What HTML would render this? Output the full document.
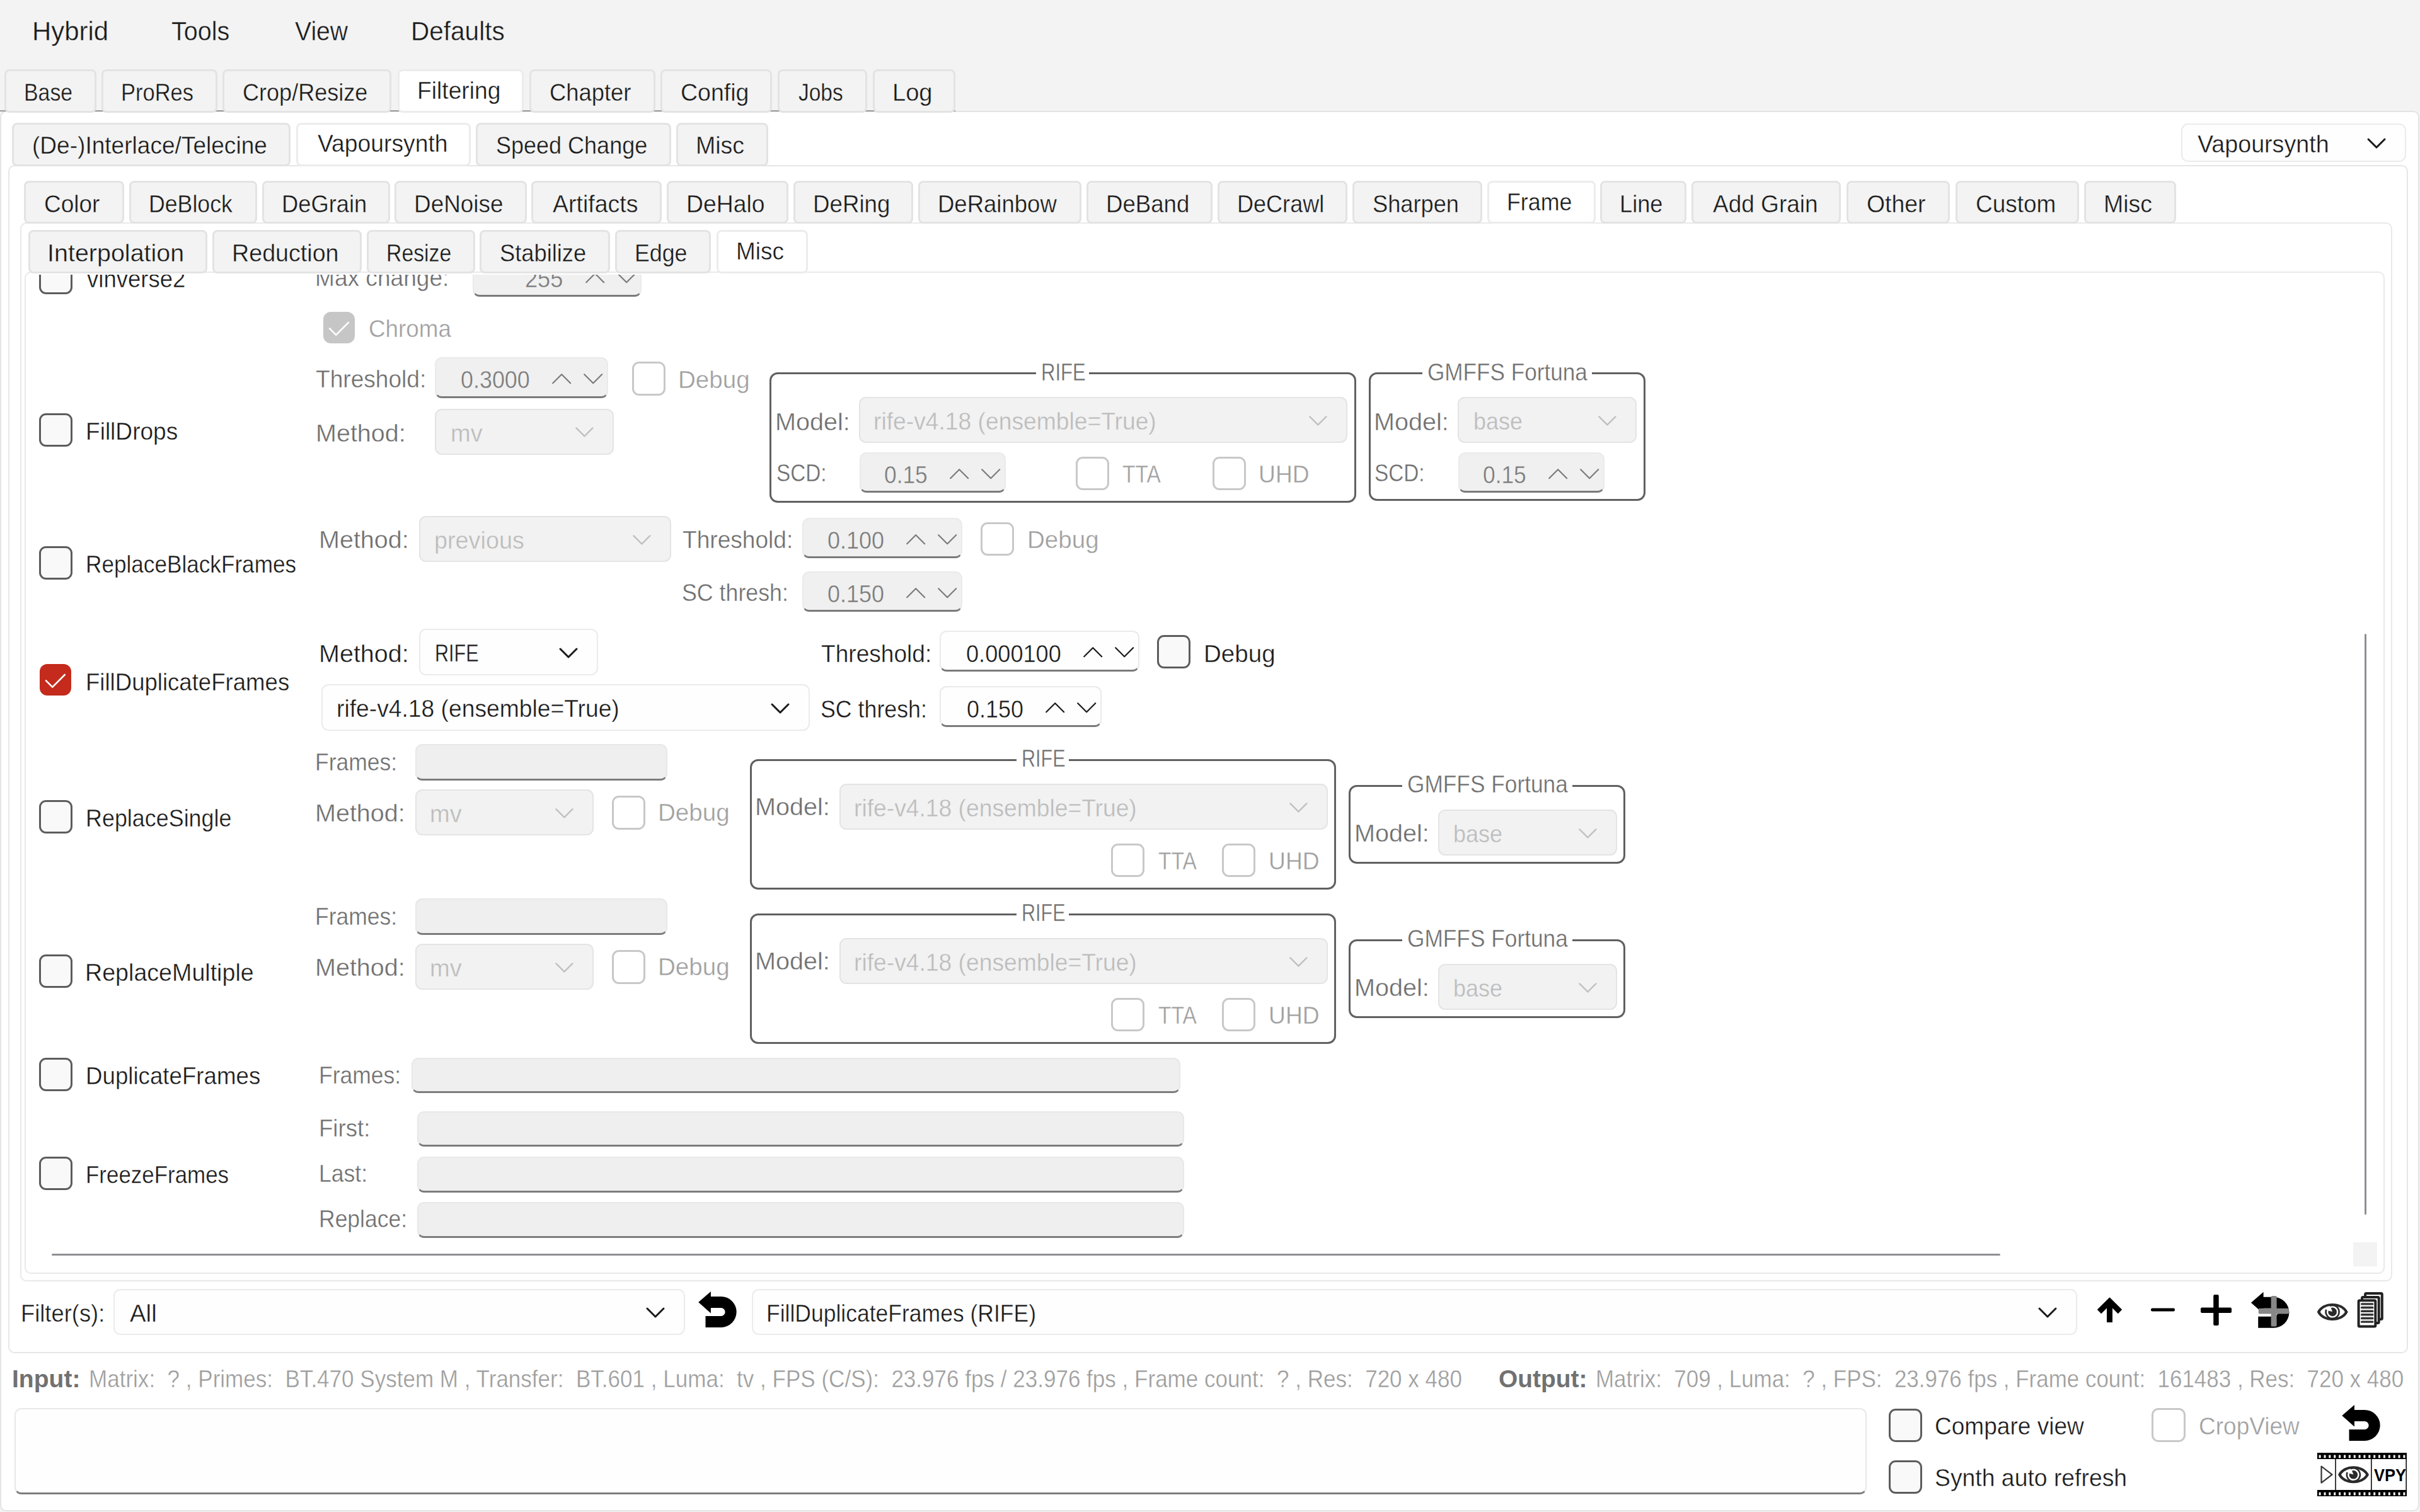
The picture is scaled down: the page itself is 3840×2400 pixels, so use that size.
<!DOCTYPE html>
<html><head><meta charset="utf-8"><style>
html,body{margin:0;padding:0;width:3840px;height:2400px;overflow:hidden;background:#f3f3f3}
.r{position:absolute;box-sizing:border-box}
.t{position:absolute;white-space:pre;line-height:1;font-family:"Liberation Sans",sans-serif;transform-origin:0 0}
</style></head><body>
<div class="r" style="left:0;top:0;width:3840px;height:2400px;background:#f3f3f3"></div>
<span class="t" style="left:50.63px;top:29px;font-size:42px;color:#1a1a1a;transform:scaleX(0.9978);-webkit-text-stroke:0.4px #f3f3f3;">Hybrid</span>
<span class="t" style="left:272.18px;top:29px;font-size:42px;color:#1a1a1a;transform:scaleX(0.9412);-webkit-text-stroke:0.4px #f3f3f3;">Tools</span>
<span class="t" style="left:467.77px;top:29px;font-size:42px;color:#1a1a1a;transform:scaleX(0.9320);-webkit-text-stroke:0.4px #f3f3f3;">View</span>
<span class="t" style="left:651.74px;top:29px;font-size:42px;color:#1a1a1a;transform:scaleX(0.9648);-webkit-text-stroke:0.4px #f3f3f3;">Defaults</span>
<div class="r" style="left:0px;top:176px;width:3839px;height:2223px;background:#ffffff;border:2px solid #e4e4e4;border-radius:10px;"></div>
<div class="r" style="left:0px;top:175px;width:1516px;height:1.5px;background:#9a9a9a;"></div>
<div class="r" style="left:7px;top:110px;width:146px;height:68.5px;background:#f3f3f3;border:3px solid #e3e3e3;border-radius:8px;"></div>
<span class="t" style="left:38.29px;top:127px;font-size:39px;color:#1a1a1a;transform:scaleX(0.8678);-webkit-text-stroke:0.4px #f3f3f3;">Base</span>
<div class="r" style="left:161px;top:110px;width:184px;height:68.5px;background:#f3f3f3;border:3px solid #e3e3e3;border-radius:8px;"></div>
<span class="t" style="left:192.24px;top:127px;font-size:39px;color:#1a1a1a;transform:scaleX(0.8845);-webkit-text-stroke:0.4px #f3f3f3;">ProRes</span>
<div class="r" style="left:353px;top:110px;width:268px;height:68.5px;background:#f3f3f3;border:3px solid #e3e3e3;border-radius:8px;"></div>
<span class="t" style="left:385.15px;top:127px;font-size:39px;color:#1a1a1a;transform:scaleX(0.9247);-webkit-text-stroke:0.4px #f3f3f3;">Crop/Resize</span>
<div class="r" style="left:631px;top:110px;width:200px;height:68.5px;background:#ffffff;border:3px solid #ececec;border-radius:8px;"></div>
<span class="t" style="left:662.02px;top:124px;font-size:39px;color:#1a1a1a;transform:scaleX(0.9549);-webkit-text-stroke:0.4px #fff;">Filtering</span>
<div class="r" style="left:840px;top:110px;width:200px;height:68.5px;background:#f3f3f3;border:3px solid #e3e3e3;border-radius:8px;"></div>
<span class="t" style="left:872.13px;top:127px;font-size:39px;color:#1a1a1a;transform:scaleX(0.9330);-webkit-text-stroke:0.4px #f3f3f3;">Chapter</span>
<div class="r" style="left:1048px;top:110px;width:177px;height:68.5px;background:#f3f3f3;border:3px solid #e3e3e3;border-radius:8px;"></div>
<span class="t" style="left:1080.08px;top:127px;font-size:39px;color:#1a1a1a;transform:scaleX(0.9618);-webkit-text-stroke:0.4px #f3f3f3;">Config</span>
<div class="r" style="left:1234px;top:110px;width:142px;height:68.5px;background:#f3f3f3;border:3px solid #e3e3e3;border-radius:8px;"></div>
<span class="t" style="left:1267.46px;top:127px;font-size:39px;color:#1a1a1a;transform:scaleX(0.8585);-webkit-text-stroke:0.4px #f3f3f3;">Jobs</span>
<div class="r" style="left:1385px;top:110px;width:131px;height:68.5px;background:#f3f3f3;border:3px solid #e3e3e3;border-radius:8px;"></div>
<span class="t" style="left:1415.95px;top:127px;font-size:39px;color:#1a1a1a;transform:scaleX(0.9768);-webkit-text-stroke:0.4px #f3f3f3;">Log</span>
<div class="r" style="left:13px;top:262px;width:3808px;height:1886px;background:#ffffff;border:2px solid #e6e6e6;border-radius:10px;"></div>
<div class="r" style="left:19px;top:195px;width:442px;height:69px;background:#f3f3f3;border:3px solid #e3e3e3;border-radius:8px;"></div>
<span class="t" style="left:50.74px;top:211px;font-size:39px;color:#1a1a1a;transform:scaleX(0.9504);-webkit-text-stroke:0.4px #f3f3f3;">(De-)Interlace/Telecine</span>
<div class="r" style="left:470px;top:195px;width:277px;height:69px;background:#ffffff;border:3px solid #ececec;border-radius:8px;"></div>
<span class="t" style="left:503.88px;top:208px;font-size:39px;color:#1a1a1a;transform:scaleX(0.9561);-webkit-text-stroke:0.4px #fff;">Vapoursynth</span>
<div class="r" style="left:755px;top:195px;width:310px;height:69px;background:#f3f3f3;border:3px solid #e3e3e3;border-radius:8px;"></div>
<span class="t" style="left:787.38px;top:211px;font-size:39px;color:#1a1a1a;transform:scaleX(0.9231);-webkit-text-stroke:0.4px #f3f3f3;">Speed Change</span>
<div class="r" style="left:1073px;top:195px;width:146px;height:69px;background:#f3f3f3;border:3px solid #e3e3e3;border-radius:8px;"></div>
<span class="t" style="left:1104.00px;top:211px;font-size:39px;color:#1a1a1a;transform:scaleX(0.9605);-webkit-text-stroke:0.4px #f3f3f3;">Misc</span>
<div class="r" style="left:3461px;top:196px;width:357px;height:61px;background:#fefefe;border:2px solid #ebebeb;border-radius:11px;"></div>
<span class="t" style="left:3486.88px;top:209px;font-size:39px;color:#1a1a1a;transform:scaleX(0.9654);-webkit-text-stroke:0.4px #fefefe;">Vapoursynth</span>
<svg class="r" style="left:3755px;top:218.0px" width="32" height="19.0"><path d="M3 3 L16.0 16.0 L29 3" fill="none" stroke="#1a1a1a" stroke-width="3" stroke-linecap="round" stroke-linejoin="round"/></svg>
<div class="r" style="left:32px;top:353px;width:3764px;height:1681px;background:#ffffff;border:2px solid #e9e9e9;border-radius:10px;"></div>
<div class="r" style="left:38px;top:286.5px;width:159px;height:68.5px;background:#f3f3f3;border:3px solid #e3e3e3;border-radius:8px;"></div>
<span class="t" style="left:70.10px;top:304px;font-size:39px;color:#1a1a1a;transform:scaleX(0.9490);-webkit-text-stroke:0.4px #f3f3f3;">Color</span>
<div class="r" style="left:205px;top:286.5px;width:203px;height:68.5px;background:#f3f3f3;border:3px solid #e3e3e3;border-radius:8px;"></div>
<span class="t" style="left:236.14px;top:304px;font-size:39px;color:#1a1a1a;transform:scaleX(0.9147);-webkit-text-stroke:0.4px #f3f3f3;">DeBlock</span>
<div class="r" style="left:416px;top:286.5px;width:203px;height:68.5px;background:#f3f3f3;border:3px solid #e3e3e3;border-radius:8px;"></div>
<span class="t" style="left:447.09px;top:304px;font-size:39px;color:#1a1a1a;transform:scaleX(0.9319);-webkit-text-stroke:0.4px #f3f3f3;">DeGrain</span>
<div class="r" style="left:626px;top:286.5px;width:210px;height:68.5px;background:#f3f3f3;border:3px solid #e3e3e3;border-radius:8px;"></div>
<span class="t" style="left:657.04px;top:304px;font-size:39px;color:#1a1a1a;transform:scaleX(0.9465);-webkit-text-stroke:0.4px #f3f3f3;">DeNoise</span>
<div class="r" style="left:843px;top:286.5px;width:207px;height:68.5px;background:#f3f3f3;border:3px solid #e3e3e3;border-radius:8px;"></div>
<span class="t" style="left:876.88px;top:304px;font-size:39px;color:#1a1a1a;transform:scaleX(0.9614);-webkit-text-stroke:0.4px #f3f3f3;">Artifacts</span>
<div class="r" style="left:1058px;top:286.5px;width:193px;height:68.5px;background:#f3f3f3;border:3px solid #e3e3e3;border-radius:8px;"></div>
<span class="t" style="left:1089.01px;top:304px;font-size:39px;color:#1a1a1a;transform:scaleX(0.9571);-webkit-text-stroke:0.4px #f3f3f3;">DeHalo</span>
<div class="r" style="left:1259px;top:286.5px;width:190px;height:68.5px;background:#f3f3f3;border:3px solid #e3e3e3;border-radius:8px;"></div>
<span class="t" style="left:1290.06px;top:304px;font-size:39px;color:#1a1a1a;transform:scaleX(0.9407);-webkit-text-stroke:0.4px #f3f3f3;">DeRing</span>
<div class="r" style="left:1457px;top:286.5px;width:259px;height:68.5px;background:#f3f3f3;border:3px solid #e3e3e3;border-radius:8px;"></div>
<span class="t" style="left:1488.07px;top:304px;font-size:39px;color:#1a1a1a;transform:scaleX(0.9364);-webkit-text-stroke:0.4px #f3f3f3;">DeRainbow</span>
<div class="r" style="left:1724px;top:286.5px;width:200px;height:68.5px;background:#f3f3f3;border:3px solid #e3e3e3;border-radius:8px;"></div>
<span class="t" style="left:1755.07px;top:304px;font-size:39px;color:#1a1a1a;transform:scaleX(0.9390);-webkit-text-stroke:0.4px #f3f3f3;">DeBand</span>
<div class="r" style="left:1932px;top:286.5px;width:206px;height:68.5px;background:#f3f3f3;border:3px solid #e3e3e3;border-radius:8px;"></div>
<span class="t" style="left:1963.11px;top:304px;font-size:39px;color:#1a1a1a;transform:scaleX(0.9244);-webkit-text-stroke:0.4px #f3f3f3;">DeCrawl</span>
<div class="r" style="left:2146px;top:286.5px;width:206px;height:68.5px;background:#f3f3f3;border:3px solid #e3e3e3;border-radius:8px;"></div>
<span class="t" style="left:2178.37px;top:304px;font-size:39px;color:#1a1a1a;transform:scaleX(0.9293);-webkit-text-stroke:0.4px #f3f3f3;">Sharpen</span>
<div class="r" style="left:2360px;top:286.5px;width:172px;height:68.5px;background:#ffffff;border:3px solid #ececec;border-radius:8px;"></div>
<span class="t" style="left:2391.13px;top:301px;font-size:39px;color:#1a1a1a;transform:scaleX(0.9177);-webkit-text-stroke:0.4px #fff;">Frame</span>
<div class="r" style="left:2539px;top:286.5px;width:137px;height:68.5px;background:#f3f3f3;border:3px solid #e3e3e3;border-radius:8px;"></div>
<span class="t" style="left:2570.10px;top:304px;font-size:39px;color:#1a1a1a;transform:scaleX(0.9292);-webkit-text-stroke:0.4px #f3f3f3;">Line</span>
<div class="r" style="left:2684px;top:286.5px;width:237px;height:68.5px;background:#f3f3f3;border:3px solid #e3e3e3;border-radius:8px;"></div>
<span class="t" style="left:2717.88px;top:304px;font-size:39px;color:#1a1a1a;transform:scaleX(0.9487);-webkit-text-stroke:0.4px #f3f3f3;">Add Grain</span>
<div class="r" style="left:2930px;top:286.5px;width:164px;height:68.5px;background:#f3f3f3;border:3px solid #e3e3e3;border-radius:8px;"></div>
<span class="t" style="left:2962.20px;top:304px;font-size:39px;color:#1a1a1a;transform:scaleX(0.9579);-webkit-text-stroke:0.4px #f3f3f3;">Other</span>
<div class="r" style="left:3103px;top:286.5px;width:196px;height:68.5px;background:#f3f3f3;border:3px solid #e3e3e3;border-radius:8px;"></div>
<span class="t" style="left:3135.10px;top:304px;font-size:39px;color:#1a1a1a;transform:scaleX(0.9480);-webkit-text-stroke:0.4px #f3f3f3;">Custom</span>
<div class="r" style="left:3307px;top:286.5px;width:146px;height:68.5px;background:#f3f3f3;border:3px solid #e3e3e3;border-radius:8px;"></div>
<span class="t" style="left:3338.00px;top:304px;font-size:39px;color:#1a1a1a;transform:scaleX(0.9605);-webkit-text-stroke:0.4px #f3f3f3;">Misc</span>
<div class="r" style="left:39px;top:431px;width:3745px;height:1591px;background:#ffffff;border:2px solid #e9e9e9;border-radius:10px;"></div>
<div class="r" style="left:45px;top:365px;width:284px;height:69px;background:#f3f3f3;border:3px solid #e3e3e3;border-radius:8px;"></div>
<span class="t" style="left:75.33px;top:382px;font-size:39px;color:#1a1a1a;transform:scaleX(1.0120);-webkit-text-stroke:0.4px #f3f3f3;">Interpolation</span>
<div class="r" style="left:337px;top:365px;width:237px;height:69px;background:#f3f3f3;border:3px solid #e3e3e3;border-radius:8px;"></div>
<span class="t" style="left:367.98px;top:382px;font-size:39px;color:#1a1a1a;transform:scaleX(0.9654);-webkit-text-stroke:0.4px #f3f3f3;">Reduction</span>
<div class="r" style="left:582px;top:365px;width:172px;height:69px;background:#f3f3f3;border:3px solid #e3e3e3;border-radius:8px;"></div>
<span class="t" style="left:613.30px;top:382px;font-size:39px;color:#1a1a1a;transform:scaleX(0.8656);-webkit-text-stroke:0.4px #f3f3f3;">Resize</span>
<div class="r" style="left:761px;top:365px;width:207px;height:69px;background:#f3f3f3;border:3px solid #e3e3e3;border-radius:8px;"></div>
<span class="t" style="left:793.37px;top:382px;font-size:39px;color:#1a1a1a;transform:scaleX(0.9306);-webkit-text-stroke:0.4px #f3f3f3;">Stabilize</span>
<div class="r" style="left:976px;top:365px;width:152px;height:69px;background:#f3f3f3;border:3px solid #e3e3e3;border-radius:8px;"></div>
<span class="t" style="left:1007.14px;top:382px;font-size:39px;color:#1a1a1a;transform:scaleX(0.9159);-webkit-text-stroke:0.4px #f3f3f3;">Edge</span>
<div class="r" style="left:1137px;top:365px;width:145px;height:69px;background:#ffffff;border:3px solid #ececec;border-radius:8px;"></div>
<span class="t" style="left:1168.04px;top:379px;font-size:39px;color:#1a1a1a;transform:scaleX(0.9474);-webkit-text-stroke:0.4px #fff;">Misc</span>
<div class="r" style="left:41px;top:436px;width:3741px;height:1584px;overflow:hidden"><div class="r" style="left:-41px;top:-436px;width:3840px;height:2400px">
<div class="r" style="left:61.5px;top:413.5px;width:53.0px;height:53.0px;background:#f9f9f9;border:3px solid #5c5c5c;border-radius:11px;"></div>
<span class="t" style="left:138.38px;top:422.5px;font-size:39px;color:#1a1a1a;transform:scaleX(0.9371);-webkit-text-stroke:0.4px #fff;">vinverse2</span>
<span class="t" style="left:500.03px;top:420.5px;font-size:39px;color:#6e6e6e;transform:scaleX(0.9510);-webkit-text-stroke:0.4px #fff;">Max change:</span>
<div class="r" style="left:750px;top:407px;width:268px;height:64px;background:#f0f0f0;border:2px solid #eaeaea;border-radius:11px;border-bottom:3px solid #7a7a7a;"></div>
<svg class="r" style="left:927.8px;top:431.8px" width="32.4" height="18.4"><path d="M2.2 16.2 L16.2 2.2 L30.2 16.2" fill="none" stroke="#7b7b7b" stroke-width="2.2" stroke-linecap="round" stroke-linejoin="round"/></svg>
<svg class="r" style="left:977.8px;top:431.8px" width="32.4" height="18.4"><path d="M2.2 2.2 L16.2 16.2 L30.2 2.2" fill="none" stroke="#7b7b7b" stroke-width="2.2" stroke-linecap="round" stroke-linejoin="round"/></svg>
<span class="t" style="left:833.15px;top:423px;font-size:39px;color:#7b7b7b;transform:scaleX(0.9268);-webkit-text-stroke:0.4px #f0f0f0;">255</span>
<div class="r" style="left:513.0px;top:495.0px;width:50.0px;height:50.0px;background:#c6c6c6;border-radius:12px;"></div>
<svg class="r" style="left:513.0px;top:495.0px" width="50" height="50"><path d="M10 26.4 L20.2 36.6 L39.8 17" fill="none" stroke="#fff" stroke-width="2.6" stroke-linecap="round" stroke-linejoin="round"/></svg>
<span class="t" style="left:585.11px;top:501.5px;font-size:39px;color:#a0a0a0;transform:scaleX(0.9433);-webkit-text-stroke:0.4px #fff;">Chroma</span>
<span class="t" style="left:501.17px;top:582px;font-size:39px;color:#6e6e6e;transform:scaleX(0.9513);-webkit-text-stroke:0.4px #fff;">Threshold:</span>
<div class="r" style="left:690px;top:567px;width:275px;height:65px;background:#f0f0f0;border:2px solid #eaeaea;border-radius:11px;border-bottom:3px solid #7a7a7a;"></div>
<svg class="r" style="left:874.8px;top:592.3px" width="32.4" height="18.4"><path d="M2.2 16.2 L16.2 2.2 L30.2 16.2" fill="none" stroke="#7b7b7b" stroke-width="2.2" stroke-linecap="round" stroke-linejoin="round"/></svg>
<svg class="r" style="left:924.8px;top:592.3px" width="32.4" height="18.4"><path d="M2.2 2.2 L16.2 16.2 L30.2 2.2" fill="none" stroke="#7b7b7b" stroke-width="2.2" stroke-linecap="round" stroke-linejoin="round"/></svg>
<span class="t" style="left:730.62px;top:583px;font-size:39px;color:#7b7b7b;transform:scaleX(0.9204);-webkit-text-stroke:0.4px #f0f0f0;">0.3000</span>
<div class="r" style="left:1002.5px;top:574.0px;width:53.5px;height:53.5px;background:#ffffff;border:3px solid #c8c8c8;border-radius:11px;"></div>
<span class="t" style="left:1075.91px;top:583px;font-size:39px;color:#a0a0a0;transform:scaleX(0.9886);-webkit-text-stroke:0.4px #fff;">Debug</span>
<div class="r" style="left:61.5px;top:656px;width:53.0px;height:53px;background:#f9f9f9;border:3px solid #5c5c5c;border-radius:11px;"></div>
<span class="t" style="left:136.03px;top:665px;font-size:39px;color:#1a1a1a;transform:scaleX(0.9506);-webkit-text-stroke:0.4px #fff;">FillDrops</span>
<span class="t" style="left:500.83px;top:668px;font-size:39px;color:#6e6e6e;transform:scaleX(1.0130);-webkit-text-stroke:0.4px #fff;">Method:</span>
<div class="r" style="left:690px;top:648.5px;width:284px;height:73.5px;background:#f2f2f2;border:2px solid #e4e4e4;border-radius:11px;"></div>
<span class="t" style="left:714.94px;top:668px;font-size:39px;color:#bcbcbc;transform:scaleX(0.9746);-webkit-text-stroke:0.4px #f2f2f2;">mv</span>
<svg class="r" style="left:911.6px;top:677.35px" width="30.8" height="17.8"><path d="M2.4 2.4 L15.4 15.4 L28.4 2.4" fill="none" stroke="#c0c0c0" stroke-width="2.4" stroke-linecap="round" stroke-linejoin="round"/></svg>
<div class="r" style="left:1221px;top:591px;width:931px;height:207px;border:3px solid #606060;border-radius:13px;"></div>
<div class="r" style="left:1644px;top:589px;width:84px;height:7px;background:#ffffff;"></div>
<span class="t" style="left:1651.51px;top:571px;font-size:39px;color:#6e6e6e;transform:scaleX(0.7964);-webkit-text-stroke:0.4px #fff;">RIFE</span>
<span class="t" style="left:1229.83px;top:650px;font-size:39px;color:#6e6e6e;transform:scaleX(1.0147);-webkit-text-stroke:0.4px #fff;">Model:</span>
<div class="r" style="left:1363px;top:630px;width:775px;height:73px;background:#f2f2f2;border:2px solid #e4e4e4;border-radius:11px;"></div>
<span class="t" style="left:1386.49px;top:649px;font-size:39px;color:#bcbcbc;transform:scaleX(0.9548);-webkit-text-stroke:0.4px #f2f2f2;">rife-v4.18 (ensemble=True)</span>
<svg class="r" style="left:2075.6px;top:658.6px" width="30.8" height="17.8"><path d="M2.4 2.4 L15.4 15.4 L28.4 2.4" fill="none" stroke="#c0c0c0" stroke-width="2.4" stroke-linecap="round" stroke-linejoin="round"/></svg>
<span class="t" style="left:1231.51px;top:731px;font-size:39px;color:#6e6e6e;transform:scaleX(0.8535);-webkit-text-stroke:0.4px #fff;">SCD:</span>
<div class="r" style="left:1364px;top:718px;width:232px;height:64px;background:#f0f0f0;border:2px solid #eaeaea;border-radius:11px;border-bottom:3px solid #7a7a7a;"></div>
<svg class="r" style="left:1505.8px;top:742.8px" width="32.4" height="18.4"><path d="M2.2 16.2 L16.2 2.2 L30.2 16.2" fill="none" stroke="#7b7b7b" stroke-width="2.2" stroke-linecap="round" stroke-linejoin="round"/></svg>
<svg class="r" style="left:1555.8px;top:742.8px" width="32.4" height="18.4"><path d="M2.2 2.2 L16.2 16.2 L30.2 2.2" fill="none" stroke="#7b7b7b" stroke-width="2.2" stroke-linecap="round" stroke-linejoin="round"/></svg>
<span class="t" style="left:1402.64px;top:734px;font-size:39px;color:#7b7b7b;transform:scaleX(0.9057);-webkit-text-stroke:0.4px #f0f0f0;">0.15</span>
<div class="r" style="left:1706.5px;top:724.5px;width:53.5px;height:53.5px;background:#ffffff;border:3px solid #c8c8c8;border-radius:11px;"></div>
<span class="t" style="left:1781.25px;top:733px;font-size:39px;color:#a0a0a0;transform:scaleX(0.8602);-webkit-text-stroke:0.4px #fff;">TTA</span>
<div class="r" style="left:1923.5px;top:724.5px;width:53.5px;height:53.5px;background:#ffffff;border:3px solid #c8c8c8;border-radius:11px;"></div>
<span class="t" style="left:1997.14px;top:733px;font-size:39px;color:#a0a0a0;transform:scaleX(0.9545);-webkit-text-stroke:0.4px #fff;">UHD</span>
<div class="r" style="left:2172px;top:591px;width:439px;height:204px;border:3px solid #606060;border-radius:13px;"></div>
<div class="r" style="left:2257px;top:589px;width:269px;height:7px;background:#ffffff;"></div>
<span class="t" style="left:2265.20px;top:571px;font-size:39px;color:#6e6e6e;transform:scaleX(0.9008);-webkit-text-stroke:0.4px #fff;">GMFFS Fortuna</span>
<span class="t" style="left:2179.83px;top:650px;font-size:39px;color:#6e6e6e;transform:scaleX(1.0147);-webkit-text-stroke:0.4px #fff;">Model:</span>
<div class="r" style="left:2313px;top:630px;width:284px;height:73px;background:#f2f2f2;border:2px solid #e4e4e4;border-radius:11px;"></div>
<span class="t" style="left:2337.70px;top:649px;font-size:39px;color:#bcbcbc;transform:scaleX(0.9207);-webkit-text-stroke:0.4px #f2f2f2;">base</span>
<svg class="r" style="left:2534.6px;top:658.6px" width="30.8" height="17.8"><path d="M2.4 2.4 L15.4 15.4 L28.4 2.4" fill="none" stroke="#c0c0c0" stroke-width="2.4" stroke-linecap="round" stroke-linejoin="round"/></svg>
<span class="t" style="left:2180.51px;top:731px;font-size:39px;color:#6e6e6e;transform:scaleX(0.8535);-webkit-text-stroke:0.4px #fff;">SCD:</span>
<div class="r" style="left:2314px;top:718px;width:232px;height:64px;background:#f0f0f0;border:2px solid #eaeaea;border-radius:11px;border-bottom:3px solid #7a7a7a;"></div>
<svg class="r" style="left:2455.8px;top:742.8px" width="32.4" height="18.4"><path d="M2.2 16.2 L16.2 2.2 L30.2 16.2" fill="none" stroke="#7b7b7b" stroke-width="2.2" stroke-linecap="round" stroke-linejoin="round"/></svg>
<svg class="r" style="left:2505.8px;top:742.8px" width="32.4" height="18.4"><path d="M2.2 2.2 L16.2 16.2 L30.2 2.2" fill="none" stroke="#7b7b7b" stroke-width="2.2" stroke-linecap="round" stroke-linejoin="round"/></svg>
<span class="t" style="left:2352.64px;top:734px;font-size:39px;color:#7b7b7b;transform:scaleX(0.9057);-webkit-text-stroke:0.4px #f0f0f0;">0.15</span>
<div class="r" style="left:61.5px;top:867px;width:53.0px;height:53px;background:#f9f9f9;border:3px solid #5c5c5c;border-radius:11px;"></div>
<span class="t" style="left:135.68px;top:876px;font-size:39px;color:#1a1a1a;transform:scaleX(0.9013);-webkit-text-stroke:0.4px #fff;">ReplaceBlackFrames</span>
<span class="t" style="left:505.83px;top:837px;font-size:39px;color:#6e6e6e;transform:scaleX(1.0130);-webkit-text-stroke:0.4px #fff;">Method:</span>
<div class="r" style="left:665px;top:819px;width:400px;height:73px;background:#f2f2f2;border:2px solid #e4e4e4;border-radius:11px;"></div>
<span class="t" style="left:688.58px;top:838px;font-size:39px;color:#bcbcbc;transform:scaleX(0.9686);-webkit-text-stroke:0.4px #f2f2f2;">previous</span>
<svg class="r" style="left:1002.6px;top:847.6px" width="30.8" height="17.8"><path d="M2.4 2.4 L15.4 15.4 L28.4 2.4" fill="none" stroke="#c0c0c0" stroke-width="2.4" stroke-linecap="round" stroke-linejoin="round"/></svg>
<span class="t" style="left:1083.17px;top:837px;font-size:39px;color:#6e6e6e;transform:scaleX(0.9513);-webkit-text-stroke:0.4px #fff;">Threshold:</span>
<div class="r" style="left:1273px;top:822px;width:254px;height:64px;background:#f0f0f0;border:2px solid #eaeaea;border-radius:11px;border-bottom:3px solid #7a7a7a;"></div>
<svg class="r" style="left:1436.8px;top:846.8px" width="32.4" height="18.4"><path d="M2.2 16.2 L16.2 2.2 L30.2 16.2" fill="none" stroke="#7b7b7b" stroke-width="2.2" stroke-linecap="round" stroke-linejoin="round"/></svg>
<svg class="r" style="left:1486.8px;top:846.8px" width="32.4" height="18.4"><path d="M2.2 2.2 L16.2 16.2 L30.2 2.2" fill="none" stroke="#7b7b7b" stroke-width="2.2" stroke-linecap="round" stroke-linejoin="round"/></svg>
<span class="t" style="left:1312.62px;top:838px;font-size:39px;color:#7b7b7b;transform:scaleX(0.9206);-webkit-text-stroke:0.4px #f0f0f0;">0.100</span>
<div class="r" style="left:1555.5px;top:828.5px;width:53.5px;height:53.5px;background:#ffffff;border:3px solid #c8c8c8;border-radius:11px;"></div>
<span class="t" style="left:1629.91px;top:837px;font-size:39px;color:#a0a0a0;transform:scaleX(0.9886);-webkit-text-stroke:0.4px #fff;">Debug</span>
<span class="t" style="left:1082.40px;top:921px;font-size:39px;color:#6e6e6e;transform:scaleX(0.9168);-webkit-text-stroke:0.4px #fff;">SC thresh:</span>
<div class="r" style="left:1273px;top:907px;width:254px;height:64px;background:#f0f0f0;border:2px solid #eaeaea;border-radius:11px;border-bottom:3px solid #7a7a7a;"></div>
<svg class="r" style="left:1436.8px;top:931.8px" width="32.4" height="18.4"><path d="M2.2 16.2 L16.2 2.2 L30.2 16.2" fill="none" stroke="#7b7b7b" stroke-width="2.2" stroke-linecap="round" stroke-linejoin="round"/></svg>
<svg class="r" style="left:1486.8px;top:931.8px" width="32.4" height="18.4"><path d="M2.2 2.2 L16.2 16.2 L30.2 2.2" fill="none" stroke="#7b7b7b" stroke-width="2.2" stroke-linecap="round" stroke-linejoin="round"/></svg>
<span class="t" style="left:1312.62px;top:923px;font-size:39px;color:#7b7b7b;transform:scaleX(0.9206);-webkit-text-stroke:0.4px #f0f0f0;">0.150</span>
<div class="r" style="left:63.0px;top:1054.0px;width:50.0px;height:50.0px;background:#c42b1c;border-radius:12px;"></div>
<svg class="r" style="left:63.0px;top:1054.0px" width="50" height="50"><path d="M10 26.4 L20.2 36.6 L39.8 17" fill="none" stroke="#fff" stroke-width="2.6" stroke-linecap="round" stroke-linejoin="round"/></svg>
<span class="t" style="left:135.57px;top:1063px;font-size:39px;color:#1a1a1a;transform:scaleX(0.9379);-webkit-text-stroke:0.4px #fff;">FillDuplicateFrames</span>
<span class="t" style="left:505.83px;top:1018px;font-size:39px;color:#1a1a1a;transform:scaleX(1.0130);-webkit-text-stroke:0.4px #fff;">Method:</span>
<div class="r" style="left:665px;top:998px;width:284px;height:74px;background:#fefefe;border:2px solid #ebebeb;border-radius:11px;"></div>
<span class="t" style="left:689.55px;top:1017px;font-size:39px;color:#1a1a1a;transform:scaleX(0.7845);-webkit-text-stroke:0.4px #fefefe;">RIFE</span>
<svg class="r" style="left:886px;top:1026.5px" width="32" height="19.0"><path d="M3 3 L16.0 16.0 L29 3" fill="none" stroke="#1a1a1a" stroke-width="3" stroke-linecap="round" stroke-linejoin="round"/></svg>
<span class="t" style="left:1303.17px;top:1018px;font-size:39px;color:#1a1a1a;transform:scaleX(0.9513);-webkit-text-stroke:0.4px #fff;">Threshold:</span>
<div class="r" style="left:1491px;top:1001px;width:317px;height:64.5px;background:#fefefe;border:2px solid #eaeaea;border-radius:11px;border-bottom:3px solid #7a7a7a;"></div>
<svg class="r" style="left:1717.8px;top:1026.05px" width="32.4" height="18.4"><path d="M2.2 16.2 L16.2 2.2 L30.2 16.2" fill="none" stroke="#1a1a1a" stroke-width="2.2" stroke-linecap="round" stroke-linejoin="round"/></svg>
<svg class="r" style="left:1767.8px;top:1026.05px" width="32.4" height="18.4"><path d="M2.2 2.2 L16.2 16.2 L30.2 2.2" fill="none" stroke="#1a1a1a" stroke-width="2.2" stroke-linecap="round" stroke-linejoin="round"/></svg>
<span class="t" style="left:1532.61px;top:1018px;font-size:39px;color:#1a1a1a;transform:scaleX(0.9272);-webkit-text-stroke:0.4px #fefefe;">0.000100</span>
<div class="r" style="left:1836px;top:1008px;width:53px;height:53px;background:#f9f9f9;border:3px solid #5c5c5c;border-radius:11px;"></div>
<span class="t" style="left:1909.91px;top:1018px;font-size:39px;color:#1a1a1a;transform:scaleX(0.9886);-webkit-text-stroke:0.4px #fff;">Debug</span>
<div class="r" style="left:510px;top:1086px;width:775px;height:74px;background:#fefefe;border:2px solid #ebebeb;border-radius:11px;"></div>
<span class="t" style="left:534.49px;top:1105px;font-size:39px;color:#1a1a1a;transform:scaleX(0.9548);-webkit-text-stroke:0.4px #fefefe;">rife-v4.18 (ensemble=True)</span>
<svg class="r" style="left:1222px;top:1114.5px" width="32" height="19.0"><path d="M3 3 L16.0 16.0 L29 3" fill="none" stroke="#1a1a1a" stroke-width="3" stroke-linecap="round" stroke-linejoin="round"/></svg>
<span class="t" style="left:1302.40px;top:1106px;font-size:39px;color:#1a1a1a;transform:scaleX(0.9168);-webkit-text-stroke:0.4px #fff;">SC thresh:</span>
<div class="r" style="left:1491px;top:1089px;width:257px;height:65px;background:#fefefe;border:2px solid #eaeaea;border-radius:11px;border-bottom:3px solid #7a7a7a;"></div>
<svg class="r" style="left:1657.8px;top:1114.3px" width="32.4" height="18.4"><path d="M2.2 16.2 L16.2 2.2 L30.2 16.2" fill="none" stroke="#1a1a1a" stroke-width="2.2" stroke-linecap="round" stroke-linejoin="round"/></svg>
<svg class="r" style="left:1707.8px;top:1114.3px" width="32.4" height="18.4"><path d="M2.2 2.2 L16.2 16.2 L30.2 2.2" fill="none" stroke="#1a1a1a" stroke-width="2.2" stroke-linecap="round" stroke-linejoin="round"/></svg>
<span class="t" style="left:1533.62px;top:1106px;font-size:39px;color:#1a1a1a;transform:scaleX(0.9206);-webkit-text-stroke:0.4px #fefefe;">0.150</span>
<span class="t" style="left:500.16px;top:1190px;font-size:39px;color:#6e6e6e;transform:scaleX(0.9101);-webkit-text-stroke:0.4px #fff;">Frames:</span>
<div class="r" style="left:659px;top:1181px;width:400px;height:58px;background:#efefef;border:2px solid #e8e8e8;border-radius:11px;border-bottom:3px solid #7c7c7c;"></div>
<div class="r" style="left:61.5px;top:1269.5px;width:53.0px;height:53.0px;background:#f9f9f9;border:3px solid #5c5c5c;border-radius:11px;"></div>
<span class="t" style="left:135.62px;top:1279px;font-size:39px;color:#1a1a1a;transform:scaleX(0.9204);-webkit-text-stroke:0.4px #fff;">ReplaceSingle</span>
<span class="t" style="left:499.83px;top:1271px;font-size:39px;color:#6e6e6e;transform:scaleX(1.0130);-webkit-text-stroke:0.4px #fff;">Method:</span>
<div class="r" style="left:659px;top:1253px;width:283px;height:73px;background:#f2f2f2;border:2px solid #e4e4e4;border-radius:11px;"></div>
<span class="t" style="left:682.44px;top:1272px;font-size:39px;color:#bcbcbc;transform:scaleX(0.9746);-webkit-text-stroke:0.4px #f2f2f2;">mv</span>
<svg class="r" style="left:879.6px;top:1281.6px" width="30.8" height="17.8"><path d="M2.4 2.4 L15.4 15.4 L28.4 2.4" fill="none" stroke="#c0c0c0" stroke-width="2.4" stroke-linecap="round" stroke-linejoin="round"/></svg>
<div class="r" style="left:970.5px;top:1263.0px;width:53.5px;height:53.5px;background:#ffffff;border:3px solid #c8c8c8;border-radius:11px;"></div>
<span class="t" style="left:1043.91px;top:1270px;font-size:39px;color:#a0a0a0;transform:scaleX(0.9886);-webkit-text-stroke:0.4px #fff;">Debug</span>
<div class="r" style="left:1190px;top:1205px;width:930px;height:207px;border:3px solid #606060;border-radius:13px;"></div>
<div class="r" style="left:1613px;top:1203px;width:83px;height:7px;background:#ffffff;"></div>
<span class="t" style="left:1620.55px;top:1184px;font-size:39px;color:#6e6e6e;transform:scaleX(0.7845);-webkit-text-stroke:0.4px #fff;">RIFE</span>
<span class="t" style="left:1197.83px;top:1261px;font-size:39px;color:#6e6e6e;transform:scaleX(1.0147);-webkit-text-stroke:0.4px #fff;">Model:</span>
<div class="r" style="left:1332px;top:1244px;width:775px;height:73px;background:#f2f2f2;border:2px solid #e4e4e4;border-radius:11px;"></div>
<span class="t" style="left:1355.49px;top:1263px;font-size:39px;color:#bcbcbc;transform:scaleX(0.9548);-webkit-text-stroke:0.4px #f2f2f2;">rife-v4.18 (ensemble=True)</span>
<svg class="r" style="left:2044.6px;top:1272.6px" width="30.8" height="17.8"><path d="M2.4 2.4 L15.4 15.4 L28.4 2.4" fill="none" stroke="#c0c0c0" stroke-width="2.4" stroke-linecap="round" stroke-linejoin="round"/></svg>
<div class="r" style="left:1762.5px;top:1338.5px;width:53.5px;height:53.5px;background:#ffffff;border:3px solid #c8c8c8;border-radius:11px;"></div>
<span class="t" style="left:1838.25px;top:1347px;font-size:39px;color:#a0a0a0;transform:scaleX(0.8602);-webkit-text-stroke:0.4px #fff;">TTA</span>
<div class="r" style="left:1938.5px;top:1338.5px;width:53.5px;height:53.5px;background:#ffffff;border:3px solid #c8c8c8;border-radius:11px;"></div>
<span class="t" style="left:2013.14px;top:1347px;font-size:39px;color:#a0a0a0;transform:scaleX(0.9545);-webkit-text-stroke:0.4px #fff;">UHD</span>
<div class="r" style="left:2140px;top:1246px;width:439px;height:125px;border:3px solid #606060;border-radius:13px;"></div>
<div class="r" style="left:2225px;top:1244px;width:270px;height:7px;background:#ffffff;"></div>
<span class="t" style="left:2233.19px;top:1225px;font-size:39px;color:#6e6e6e;transform:scaleX(0.9044);-webkit-text-stroke:0.4px #fff;">GMFFS Fortuna</span>
<span class="t" style="left:2148.83px;top:1303px;font-size:39px;color:#6e6e6e;transform:scaleX(1.0147);-webkit-text-stroke:0.4px #fff;">Model:</span>
<div class="r" style="left:2282px;top:1285px;width:284px;height:73px;background:#f2f2f2;border:2px solid #e4e4e4;border-radius:11px;"></div>
<span class="t" style="left:2305.70px;top:1304px;font-size:39px;color:#bcbcbc;transform:scaleX(0.9207);-webkit-text-stroke:0.4px #f2f2f2;">base</span>
<svg class="r" style="left:2503.6px;top:1313.6px" width="30.8" height="17.8"><path d="M2.4 2.4 L15.4 15.4 L28.4 2.4" fill="none" stroke="#c0c0c0" stroke-width="2.4" stroke-linecap="round" stroke-linejoin="round"/></svg>
<span class="t" style="left:500.16px;top:1435px;font-size:39px;color:#6e6e6e;transform:scaleX(0.9101);-webkit-text-stroke:0.4px #fff;">Frames:</span>
<div class="r" style="left:659px;top:1426px;width:400px;height:58px;background:#efefef;border:2px solid #e8e8e8;border-radius:11px;border-bottom:3px solid #7c7c7c;"></div>
<div class="r" style="left:61.5px;top:1514.5px;width:53.0px;height:53.0px;background:#f9f9f9;border:3px solid #5c5c5c;border-radius:11px;"></div>
<span class="t" style="left:135.49px;top:1524px;font-size:39px;color:#1a1a1a;transform:scaleX(0.9647);-webkit-text-stroke:0.4px #fff;">ReplaceMultiple</span>
<span class="t" style="left:499.83px;top:1516px;font-size:39px;color:#6e6e6e;transform:scaleX(1.0130);-webkit-text-stroke:0.4px #fff;">Method:</span>
<div class="r" style="left:659px;top:1498px;width:283px;height:73px;background:#f2f2f2;border:2px solid #e4e4e4;border-radius:11px;"></div>
<span class="t" style="left:682.44px;top:1517px;font-size:39px;color:#bcbcbc;transform:scaleX(0.9746);-webkit-text-stroke:0.4px #f2f2f2;">mv</span>
<svg class="r" style="left:879.6px;top:1526.6px" width="30.8" height="17.8"><path d="M2.4 2.4 L15.4 15.4 L28.4 2.4" fill="none" stroke="#c0c0c0" stroke-width="2.4" stroke-linecap="round" stroke-linejoin="round"/></svg>
<div class="r" style="left:970.5px;top:1508.0px;width:53.5px;height:53.5px;background:#ffffff;border:3px solid #c8c8c8;border-radius:11px;"></div>
<span class="t" style="left:1043.91px;top:1515px;font-size:39px;color:#a0a0a0;transform:scaleX(0.9886);-webkit-text-stroke:0.4px #fff;">Debug</span>
<div class="r" style="left:1190px;top:1450px;width:930px;height:207px;border:3px solid #606060;border-radius:13px;"></div>
<div class="r" style="left:1613px;top:1448px;width:83px;height:7px;background:#ffffff;"></div>
<span class="t" style="left:1620.55px;top:1429px;font-size:39px;color:#6e6e6e;transform:scaleX(0.7845);-webkit-text-stroke:0.4px #fff;">RIFE</span>
<span class="t" style="left:1197.83px;top:1506px;font-size:39px;color:#6e6e6e;transform:scaleX(1.0147);-webkit-text-stroke:0.4px #fff;">Model:</span>
<div class="r" style="left:1332px;top:1489px;width:775px;height:73px;background:#f2f2f2;border:2px solid #e4e4e4;border-radius:11px;"></div>
<span class="t" style="left:1355.49px;top:1508px;font-size:39px;color:#bcbcbc;transform:scaleX(0.9548);-webkit-text-stroke:0.4px #f2f2f2;">rife-v4.18 (ensemble=True)</span>
<svg class="r" style="left:2044.6px;top:1517.6px" width="30.8" height="17.8"><path d="M2.4 2.4 L15.4 15.4 L28.4 2.4" fill="none" stroke="#c0c0c0" stroke-width="2.4" stroke-linecap="round" stroke-linejoin="round"/></svg>
<div class="r" style="left:1762.5px;top:1583.5px;width:53.5px;height:53.5px;background:#ffffff;border:3px solid #c8c8c8;border-radius:11px;"></div>
<span class="t" style="left:1838.25px;top:1592px;font-size:39px;color:#a0a0a0;transform:scaleX(0.8602);-webkit-text-stroke:0.4px #fff;">TTA</span>
<div class="r" style="left:1938.5px;top:1583.5px;width:53.5px;height:53.5px;background:#ffffff;border:3px solid #c8c8c8;border-radius:11px;"></div>
<span class="t" style="left:2013.14px;top:1592px;font-size:39px;color:#a0a0a0;transform:scaleX(0.9545);-webkit-text-stroke:0.4px #fff;">UHD</span>
<div class="r" style="left:2140px;top:1491px;width:439px;height:125px;border:3px solid #606060;border-radius:13px;"></div>
<div class="r" style="left:2225px;top:1489px;width:270px;height:7px;background:#ffffff;"></div>
<span class="t" style="left:2233.19px;top:1470px;font-size:39px;color:#6e6e6e;transform:scaleX(0.9044);-webkit-text-stroke:0.4px #fff;">GMFFS Fortuna</span>
<span class="t" style="left:2148.83px;top:1548px;font-size:39px;color:#6e6e6e;transform:scaleX(1.0147);-webkit-text-stroke:0.4px #fff;">Model:</span>
<div class="r" style="left:2282px;top:1530px;width:284px;height:73px;background:#f2f2f2;border:2px solid #e4e4e4;border-radius:11px;"></div>
<span class="t" style="left:2305.70px;top:1549px;font-size:39px;color:#bcbcbc;transform:scaleX(0.9207);-webkit-text-stroke:0.4px #f2f2f2;">base</span>
<svg class="r" style="left:2503.6px;top:1558.6px" width="30.8" height="17.8"><path d="M2.4 2.4 L15.4 15.4 L28.4 2.4" fill="none" stroke="#c0c0c0" stroke-width="2.4" stroke-linecap="round" stroke-linejoin="round"/></svg>
<div class="r" style="left:61.5px;top:1678.5px;width:53.0px;height:53.0px;background:#f9f9f9;border:3px solid #5c5c5c;border-radius:11px;"></div>
<span class="t" style="left:135.56px;top:1688px;font-size:39px;color:#1a1a1a;transform:scaleX(0.9406);-webkit-text-stroke:0.4px #fff;">DuplicateFrames</span>
<span class="t" style="left:506.16px;top:1687px;font-size:39px;color:#6e6e6e;transform:scaleX(0.9101);-webkit-text-stroke:0.4px #fff;">Frames:</span>
<div class="r" style="left:653px;top:1679px;width:1220px;height:56px;background:#efefef;border:2px solid #e8e8e8;border-radius:11px;border-bottom:3px solid #7c7c7c;"></div>
<div class="r" style="left:61.5px;top:1835.5px;width:53.0px;height:53.0px;background:#f9f9f9;border:3px solid #5c5c5c;border-radius:11px;"></div>
<span class="t" style="left:135.70px;top:1845px;font-size:39px;color:#1a1a1a;transform:scaleX(0.8956);-webkit-text-stroke:0.4px #fff;">FreezeFrames</span>
<span class="t" style="left:506.07px;top:1771px;font-size:39px;color:#6e6e6e;transform:scaleX(0.9390);-webkit-text-stroke:0.4px #fff;">First:</span>
<div class="r" style="left:662px;top:1764px;width:1217px;height:56px;background:#efefef;border:2px solid #e8e8e8;border-radius:11px;border-bottom:3px solid #7c7c7c;"></div>
<span class="t" style="left:506.15px;top:1843px;font-size:39px;color:#6e6e6e;transform:scaleX(0.9117);-webkit-text-stroke:0.4px #fff;">Last:</span>
<div class="r" style="left:662px;top:1836px;width:1217px;height:57px;background:#efefef;border:2px solid #e8e8e8;border-radius:11px;border-bottom:3px solid #7c7c7c;"></div>
<span class="t" style="left:506.16px;top:1915px;font-size:39px;color:#6e6e6e;transform:scaleX(0.9100);-webkit-text-stroke:0.4px #fff;">Replace:</span>
<div class="r" style="left:662px;top:1908px;width:1217px;height:57px;background:#efefef;border:2px solid #e8e8e8;border-radius:11px;border-bottom:3px solid #7c7c7c;"></div>
</div></div>
<div class="r" style="left:82px;top:1989.5px;width:3092px;height:3.0px;background:#8e8e93;border-radius:2px;"></div>
<div class="r" style="left:3751.5px;top:1006px;width:3.0px;height:922px;background:#8e8e93;border-radius:2px;"></div>
<div class="r" style="left:3734px;top:1972px;width:38px;height:38px;background:#f3f3f3;"></div>
<span class="t" style="left:32.59px;top:2065px;font-size:39px;color:#1a1a1a;transform:scaleX(0.9321);-webkit-text-stroke:0.4px #fff;">Filter(s):</span>
<div class="r" style="left:180px;top:2046px;width:907px;height:73px;background:#fefefe;border:2px solid #ebebeb;border-radius:11px;"></div>
<span class="t" style="left:205.88px;top:2065px;font-size:39px;color:#1a1a1a;transform:scaleX(0.9846);-webkit-text-stroke:0.4px #fefefe;">All</span>
<svg class="r" style="left:1024px;top:2074.0px" width="32" height="19.0"><path d="M3 3 L16.0 16.0 L29 3" fill="none" stroke="#1a1a1a" stroke-width="3" stroke-linecap="round" stroke-linejoin="round"/></svg>
<svg class="r" style="left:1051.8px;top:2040.3999999999999px" width="130" height="80"><path d="M56.2 27 L75.9 9.9 L75.9 18 L92.2 18 A24.45 24.45 0 0 1 92.2 66.9 L67.5 66.9 L67.5 48.9 L92.2 48.9 A6.45 6.45 0 0 0 92.2 36 L75.9 36 L75.9 44.4 Z" fill="#000"/></svg>
<div class="r" style="left:1193px;top:2046px;width:2103px;height:73px;background:#fefefe;border:2px solid #ebebeb;border-radius:11px;"></div>
<span class="t" style="left:1216.16px;top:2065px;font-size:39px;color:#1a1a1a;transform:scaleX(0.9102);-webkit-text-stroke:0.4px #fefefe;">FillDuplicateFrames (RIFE)</span>
<svg class="r" style="left:3233px;top:2074.0px" width="32" height="19.0"><path d="M3 3 L16.0 16.0 L29 3" fill="none" stroke="#1a1a1a" stroke-width="3" stroke-linecap="round" stroke-linejoin="round"/></svg>
<svg class="r" style="left:0;top:0" width="3840" height="2400"><rect x="3343" y="2066" width="9" height="33" fill="#000"/><path d="M3331 2082 L3347.5 2065.6 L3364 2082" stroke="#000" stroke-width="9" fill="none" stroke-miterlimit="4"/><rect x="3413" y="2076.5" width="38" height="5" rx="2.2" fill="#000"/><rect x="3492" y="2075.5" width="49" height="8.5" rx="2" fill="#000"/><rect x="3512.2" y="2055" width="8.5" height="49" rx="2" fill="#000"/><path transform="translate(3515.7 2040.8)" d="M56.2 27 L75.9 9.9 L75.9 18 L92.2 18 A24.45 24.45 0 0 1 92.2 66.9 L67.5 66.9 L67.5 48.9 L92.2 48.9 A6.45 6.45 0 0 0 92.2 36 L75.9 36 L75.9 44.4 Z" fill="#000"/><rect x="3603.6" y="2056.9" width="9" height="48.6" rx="1.5" fill="#878787"/><rect x="3583.8" y="2076.7" width="48.1" height="8.9" rx="1.5" fill="#878787"/><g transform="translate(3670 2060)"><path fill-rule="evenodd" fill="#2a2a2a" d="M6.7 22.4 C15 4.5 47.2 4.5 55.7 22.4 C47.2 40.4 15 40.4 6.7 22.4 Z M11.6 22.4 C19 9.6 43.2 9.6 50.9 22.4 C43.2 35.2 19 35.2 11.6 22.4 Z"/><path fill="none" stroke="#2a2a2a" stroke-width="2.6" d="M26.83 12.81 A10.5 10.5 0 1 1 21.28 18.67"/><path fill="#2a2a2a" d="M31.1 22.099999999999998 L28.66 16.05 A6.8 6.8 0 1 1 24.60 20.41 Z"/></g><rect x="3753.1" y="2052.9" width="26.7" height="41.2" rx="1.5" fill="#fff" stroke="#222" stroke-width="4"/><rect x="3748.0" y="2058.9" width="26.7" height="41.2" rx="1.5" fill="#fff" stroke="#222" stroke-width="4"/><rect x="3742.6" y="2064.3" width="26.7" height="41.2" rx="1.5" fill="#fff" stroke="#222" stroke-width="4"/><rect x="3746" y="2068.2" width="20.3" height="3.4" rx="1.5" fill="#333"/><rect x="3746" y="2073.8" width="20.3" height="3.4" rx="1.5" fill="#333"/><rect x="3746" y="2079.5" width="20.3" height="3.4" rx="1.5" fill="#333"/><rect x="3746" y="2085.1" width="20.3" height="3.4" rx="1.5" fill="#333"/><rect x="3746" y="2090.8" width="20.3" height="3.4" rx="1.5" fill="#333"/><rect x="3746" y="2096.4" width="20.3" height="3.4" rx="1.5" fill="#333"/><path transform="translate(3660 2220)" d="M56.2 27 L75.9 9.9 L75.9 18 L92.2 18 A24.45 24.45 0 0 1 92.2 66.9 L67.5 66.9 L67.5 48.9 L92.2 48.9 A6.45 6.45 0 0 0 92.2 36 L75.9 36 L75.9 44.4 Z" fill="#000"/><g transform="translate(3660 2220)"><rect x="16.9" y="86" width="142.1" height="10" fill="#000"/><rect x="16.9" y="145" width="142.1" height="10" fill="#000"/><rect x="19.6" y="89.6" width="3" height="4.6" fill="#fff"/><rect x="19.6" y="148.8" width="3" height="4.6" fill="#fff"/><rect x="27.5" y="89.6" width="3" height="4.6" fill="#fff"/><rect x="27.5" y="148.8" width="3" height="4.6" fill="#fff"/><rect x="35.3" y="89.6" width="3" height="4.6" fill="#fff"/><rect x="35.3" y="148.8" width="3" height="4.6" fill="#fff"/><rect x="43.2" y="89.6" width="3" height="4.6" fill="#fff"/><rect x="43.2" y="148.8" width="3" height="4.6" fill="#fff"/><rect x="51.1" y="89.6" width="3" height="4.6" fill="#fff"/><rect x="51.1" y="148.8" width="3" height="4.6" fill="#fff"/><rect x="59.0" y="89.6" width="3" height="4.6" fill="#fff"/><rect x="59.0" y="148.8" width="3" height="4.6" fill="#fff"/><rect x="66.8" y="89.6" width="3" height="4.6" fill="#fff"/><rect x="66.8" y="148.8" width="3" height="4.6" fill="#fff"/><rect x="74.7" y="89.6" width="3" height="4.6" fill="#fff"/><rect x="74.7" y="148.8" width="3" height="4.6" fill="#fff"/><rect x="82.6" y="89.6" width="3" height="4.6" fill="#fff"/><rect x="82.6" y="148.8" width="3" height="4.6" fill="#fff"/><rect x="90.4" y="89.6" width="3" height="4.6" fill="#fff"/><rect x="90.4" y="148.8" width="3" height="4.6" fill="#fff"/><rect x="98.3" y="89.6" width="3" height="4.6" fill="#fff"/><rect x="98.3" y="148.8" width="3" height="4.6" fill="#fff"/><rect x="106.2" y="89.6" width="3" height="4.6" fill="#fff"/><rect x="106.2" y="148.8" width="3" height="4.6" fill="#fff"/><rect x="114.0" y="89.6" width="3" height="4.6" fill="#fff"/><rect x="114.0" y="148.8" width="3" height="4.6" fill="#fff"/><rect x="121.9" y="89.6" width="3" height="4.6" fill="#fff"/><rect x="121.9" y="148.8" width="3" height="4.6" fill="#fff"/><rect x="129.8" y="89.6" width="3" height="4.6" fill="#fff"/><rect x="129.8" y="148.8" width="3" height="4.6" fill="#fff"/><rect x="137.7" y="89.6" width="3" height="4.6" fill="#fff"/><rect x="137.7" y="148.8" width="3" height="4.6" fill="#fff"/><rect x="145.5" y="89.6" width="3" height="4.6" fill="#fff"/><rect x="145.5" y="148.8" width="3" height="4.6" fill="#fff"/><rect x="153.4" y="89.6" width="3" height="4.6" fill="#fff"/><rect x="153.4" y="148.8" width="3" height="4.6" fill="#fff"/><rect x="45.2" y="96" width="1.6" height="49" fill="#111"/><rect x="102.0" y="96" width="1.6" height="49" fill="#111"/><rect x="157.39999999999998" y="96" width="1.6" height="49" fill="#111"/><path d="M23.5 107.5 L40.5 120.6 L23.5 133.7 Z" fill="none" stroke="#333" stroke-width="2.2" stroke-linejoin="round"/><g transform="translate(43.3 98.4)"><path fill-rule="evenodd" fill="#2a2a2a" d="M6.7 22.4 C15 4.5 47.2 4.5 55.7 22.4 C47.2 40.4 15 40.4 6.7 22.4 Z M11.6 22.4 C19 9.6 43.2 9.6 50.9 22.4 C43.2 35.2 19 35.2 11.6 22.4 Z"/><path fill="none" stroke="#2a2a2a" stroke-width="2.6" d="M26.83 12.81 A10.5 10.5 0 1 1 21.28 18.67"/><path fill="#2a2a2a" d="M31.1 22.099999999999998 L28.66 16.05 A6.8 6.8 0 1 1 24.60 20.41 Z"/></g></g></svg>
<span class="t" style="left:3766.77px;top:2328px;font-size:27.6px;color:#000;transform:scaleX(0.9217);font-weight:bold;">VPY</span>
<span class="t" style="left:19.37px;top:2169px;font-size:39px;color:#717171;transform:scaleX(1.0012);font-weight:bold;">Input:</span>
<span class="t" style="left:141.19px;top:2169px;font-size:39px;color:#9d9d9d;transform:scaleX(0.8984);-webkit-text-stroke:0.4px #fff;">Matrix:  ? , Primes:  BT.470 System M , Transfer:  BT.601 , Luma:  tv , FPS (C/S):  23.976 fps / 23.976 fps , Frame count:  ? , Res:  720 x 480</span>
<span class="t" style="left:2378.38px;top:2169px;font-size:39px;color:#717171;transform:scaleX(0.9972);font-weight:bold;">Output:</span>
<span class="t" style="left:2532.20px;top:2169px;font-size:39px;color:#9d9d9d;transform:scaleX(0.8961);-webkit-text-stroke:0.4px #fff;">Matrix:  709 , Luma:  ? , FPS:  23.976 fps , Frame count:  161483 , Res:  720 x 480</span>
<div class="r" style="left:23px;top:2235px;width:2939px;height:137px;background:#fefefe;border:2px solid #e8e8e8;border-radius:11px;border-bottom:3px solid #7c7c7c;"></div>
<div class="r" style="left:2996.5px;top:2235.5px;width:53.0px;height:53.0px;background:#f9f9f9;border:3px solid #5c5c5c;border-radius:11px;"></div>
<span class="t" style="left:3070.10px;top:2244px;font-size:39px;color:#1a1a1a;transform:scaleX(0.9500);-webkit-text-stroke:0.4px #fff;">Compare view</span>
<div class="r" style="left:3414.0px;top:2235.0px;width:53.5px;height:53.5px;background:#ffffff;border:3px solid #c8c8c8;border-radius:11px;"></div>
<span class="t" style="left:3489.10px;top:2244px;font-size:39px;color:#a0a0a0;transform:scaleX(0.9489);-webkit-text-stroke:0.4px #fff;">CropView</span>
<div class="r" style="left:2996.5px;top:2317.5px;width:53.0px;height:53.0px;background:#f9f9f9;border:3px solid #5c5c5c;border-radius:11px;"></div>
<span class="t" style="left:3070.32px;top:2326px;font-size:39px;color:#1a1a1a;transform:scaleX(0.9575);-webkit-text-stroke:0.4px #fff;">Synth auto refresh</span>
</body></html>
